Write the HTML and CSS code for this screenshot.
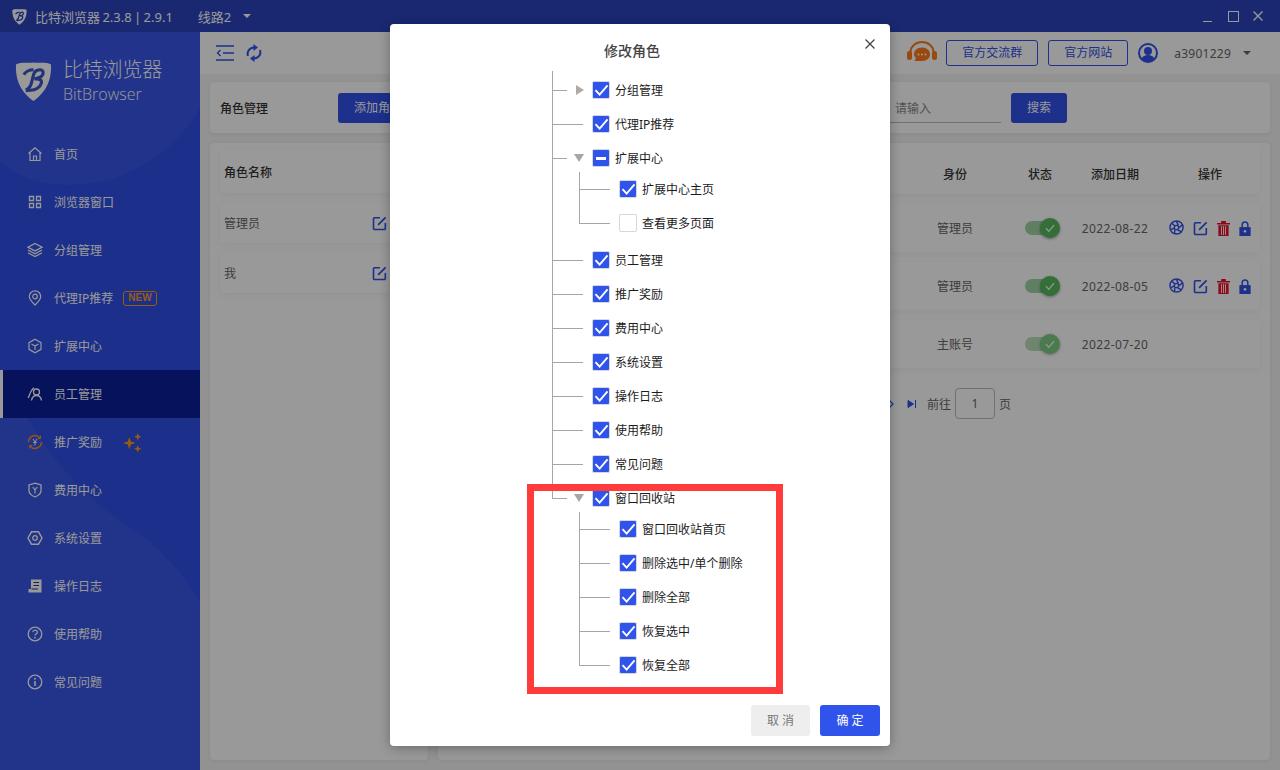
FILE: index.html
```html
<!DOCTYPE html>
<html>
<head>
    <meta charset="utf-8">
    <title>比特浏览器</title>
    <link rel="stylesheet" href="styles.css">
</head>
<body>
    <svg class="defs" xmlns="http://www.w3.org/2000/svg">
        <symbol id="i-edit" viewBox="0 0 16 16">
            <path d="M8.500 1.800H2.800A1.200 1.200 0 0 0 1.600 3v10.200a1.200 1.200 0 0 0 1.200 1.200H13a1.200 1.200 0 0 0 1.200-1.200V7.500" fill="none" stroke="currentColor" stroke-width="1.700"/>
            <path d="M6.500 9.500 14.500 1.500" fill="none" stroke="currentColor" stroke-width="1.700"/>
        </symbol>
        <symbol id="i-wheel" viewBox="0 0 16 16">
            <circle cx="8" cy="8" r="7" fill="none" stroke="currentColor" stroke-width="1.500"/>
            <circle cx="8" cy="8" r="2.300" fill="none" stroke="currentColor" stroke-width="1.300"/>
            <path d="M8 1.500 10 6M14 5.500 10.200 8.500M13 12.500 8.700 10.200M6 14.300 6.200 9.800M1.800 10.500 5.700 8.300M3 3.500 6.300 6.500" fill="none" stroke="currentColor" stroke-width="1.500"/>
        </symbol>
        <symbol id="i-trash" viewBox="0 0 14 16">
            <path d="M0 2h14v1.600H0zM4.500 0h5v2h-5zM1.500 4.500h11V16h-11z" fill="currentColor"/>
            <path d="M4.800 5.500V15M7 5.500V15M9.200 5.500V15" stroke="#fff" stroke-width="1"/>
        </symbol>
        <symbol id="i-lock" viewBox="0 0 12 16">
            <path d="M0 6.500h12V16H0z" fill="currentColor"/>
            <path d="M3 7V4a3 3 0 0 1 6 0v3" fill="none" stroke="currentColor" stroke-width="1.600"/>
            <circle cx="6" cy="11" r="1.400" fill="#fff"/>
        </symbol>
        <symbol id="i-check" viewBox="0 0 16 14">
            <path d="M1.500 6.500 6 11.500 14.500 1.500" fill="none" stroke="currentColor" stroke-width="2"/>
        </symbol>
        <symbol id="i-shield" viewBox="0 0 38 42">
            <path d="M19 2.500C13 3.500 7 1.500 1 4.500 .5 16 3 31 19 42 35 31 37.500 16 37 4.500 31 1.500 25 3.500 19 2.500Z" fill="currentColor"/>
            <path d="M11 31C16 29 17 24 18 19 19 14 20 10 26 10c4 0 4 6-1 8l-5 1.500c5-.5 8 .5 7 4.500-1 4-6 7-11 7-2 0-4 .5-5 .5M9 15c2-3 6-5 10-5" fill="none" stroke="var(--logo-cut)" stroke-width="3.200"/>
        </symbol>
    </svg>

    <header class="titlebar">
        <svg class="title-logo"><use href="#i-shield"/></svg>
        <span class="title-text">比特浏览器 2.3.8 | 2.9.1</span>
        <span class="title-line">线路2</span>
        <span class="caret-down title-caret"></span>
        <div class="win-controls">
            <span class="win-min"></span>
            <span class="win-max"></span>
            <svg class="win-close" viewBox="0 0 10 10"><path d="M.5.500l9 9M9.500.500l-9 9" stroke="currentColor" stroke-width="1.400"/></svg>
        </div>
    </header>

    <div class="app">
        <aside class="sidebar">
            <svg class="sidebar-bg" viewBox="0 0 200 738" preserveAspectRatio="none">
                <path d="M0 0H200V76C178 116 130 153 70 153 40 153 18 145 0 130Z" fill="#fff" opacity=".04"/>
                <path d="M0 386H27C60 440 92 470 128 494 160 515 182 540 200 570V738H0Z" fill="#fff" opacity=".05"/>
            </svg>
            <div class="brand">
                <svg class="brand-logo"><use href="#i-shield"/></svg>
                <div class="brand-text">
                    <div class="brand-cn">比特浏览器</div>
                    <div class="brand-en">BitBrowser</div>
                </div>
            </div>
            <nav class="menu">
                <a class="menu-item">
                    <svg class="menu-icon" viewBox="0 0 16 16"><path d="M1.500 7.500 8 1.800l6.500 5.700M3 6.500V14.500h10V6.500M6.500 14.500V10h3v4.500" fill="none" stroke="currentColor" stroke-width="1.200"/></svg>
                    <span>首页</span>
                </a>
                <a class="menu-item">
                    <svg class="menu-icon" viewBox="0 0 16 16"><path d="M2.500 2.500h4v4h-4zM9.500 2.500h4v4h-4zM2.500 9.500h4v4h-4zM9.500 9.500h4v4h-4z" fill="none" stroke="currentColor" stroke-width="1.300"/></svg>
                    <span>浏览器窗口</span>
                </a>
                <a class="menu-item">
                    <svg class="menu-icon" viewBox="0 0 16 16"><path d="M8 1.500 15 5.200 8 8.900 1 5.200ZM1 8l7 3.700L15 8M1 10.800l7 3.700 7-3.700" fill="none" stroke="currentColor" stroke-width="1.300"/></svg>
                    <span>分组管理</span>
                </a>
                <a class="menu-item">
                    <svg class="menu-icon" viewBox="0 0 16 16"><path d="M8 15C5 12 2.300 9.500 2.300 6.500a5.700 5.700 0 0 1 11.400 0C13.700 9.500 11 12 8 15Z" fill="none" stroke="currentColor" stroke-width="1.200"/><circle cx="8" cy="6.500" r="2.300" fill="none" stroke="currentColor" stroke-width="1.200"/></svg>
                    <span>代理IP推荐</span>
                    <span class="badge-new">NEW</span>
                </a>
                <a class="menu-item">
                    <svg class="menu-icon" viewBox="0 0 16 16"><path d="M8 1.300 14 4.700v6.600L8 14.700 2 11.300V4.700ZM4.500 6 8 8l3.500-2M8 8v4" fill="none" stroke="currentColor" stroke-width="1.200"/></svg>
                    <span>扩展中心</span>
                </a>
                <a class="menu-item active">
                    <svg class="menu-icon" viewBox="0 0 16 16"><circle cx="9.500" cy="6" r="3" fill="none" stroke="currentColor" stroke-width="1.300"/><path d="M4.500 14.500c.5-3 2.500-5 5-5s4.500 2 5 5M7 1.700C5 3 3 7 1.200 12" fill="none" stroke="currentColor" stroke-width="1.300"/></svg>
                    <span>员工管理</span>
                </a>
                <a class="menu-item">
                    <svg class="menu-icon orange" viewBox="0 0 16 16"><path d="M1.500 8A6.500 6.500 0 0 1 13 4M14.500 8A6.500 6.500 0 0 1 3 12" fill="none" stroke="currentColor" stroke-width="1.400"/><path d="M13.500 1.500V4.500H10.500M2.500 14.500V11.500H5.500" fill="none" stroke="currentColor" stroke-width="1"/><path d="M6 5l2 3 2-3M8 8v3.500M6.300 8.500h3.400" fill="none" stroke="#fff" stroke-width="1"/></svg>
                    <span>推广奖励</span>
                    <svg class="sparkle" viewBox="0 0 20 20"><path d="M7 5 8.500 9 13 10.500 8.500 12 7 16.500 5.500 12 1 10.500 5.500 9ZM15 1l1 2.500 2.500 1-2.500 1-1 2.500-1-2.500-2.500-1 2.500-1ZM15 12.500l1 2.500 2.500 1-2.500 1-1 2.500-1-2.500-2.500-1 2.500-1Z" fill="currentColor"/></svg>
                </a>
                <a class="menu-item">
                    <svg class="menu-icon" viewBox="0 0 16 16"><path d="M8 1.200 14 3v5.500c0 3-2.500 5-6 6.500-3.500-1.500-6-3.500-6-6.500V3Z" fill="none" stroke="currentColor" stroke-width="1.300"/><path d="M5.800 5 8 8l2.200-3M8 8v3.500" fill="none" stroke="currentColor" stroke-width="1.200"/></svg>
                    <span>费用中心</span>
                </a>
                <a class="menu-item">
                    <svg class="menu-icon" viewBox="0 0 16 16"><path d="M4.500 1.800h7L15 8l-3.500 6.200h-7L1 8Z" fill="none" stroke="currentColor" stroke-width="1.400"/><circle cx="8" cy="8" r="2.300" fill="none" stroke="currentColor" stroke-width="1.300"/></svg>
                    <span>系统设置</span>
                </a>
                <a class="menu-item">
                    <svg class="menu-icon" viewBox="0 0 16 16"><path d="M4 1.500h10.500V14.500H1.500V11H4Z" fill="currentColor"/><path d="M6.500 4.500h5.500M6.500 7.500h5.500M4.500 11H11" stroke="#1d3090" stroke-width="1.200"/></svg>
                    <span>操作日志</span>
                </a>
                <a class="menu-item">
                    <svg class="menu-icon" viewBox="0 0 16 16"><circle cx="8" cy="8" r="6.800" fill="none" stroke="currentColor" stroke-width="1.300"/><path d="M5.800 6.200C6 4.700 7 4.200 8 4.200c1.400 0 2.300.8 2.300 2 0 1.700-2.300 1.800-2.300 3.400" fill="none" stroke="currentColor" stroke-width="1.300"/><circle cx="8" cy="11.700" r=".9" fill="currentColor"/></svg>
                    <span>使用帮助</span>
                </a>
                <a class="menu-item">
                    <svg class="menu-icon" viewBox="0 0 16 16"><circle cx="8" cy="8" r="6.800" fill="none" stroke="currentColor" stroke-width="1.300"/><path d="M8 7v5" stroke="currentColor" stroke-width="1.600"/><circle cx="8" cy="4.800" r="1" fill="currentColor"/></svg>
                    <span>常见问题</span>
                </a>
            </nav>
        </aside>

        <main class="main">
            <div class="toolbar">
                <svg class="tool-collapse" viewBox="0 0 18 16"><path d="M0 1h18M7 8h11M0 15h18M4.500 5 1.500 8l3 3" fill="none" stroke="currentColor" stroke-width="1.300"/></svg>
                <svg class="tool-refresh" viewBox="0 0 16 18"><path d="M2 12C.5 7.500 3.500 3.500 8.500 3.500M14 6c1.500 4.500-1.500 8.500-6.500 8.500" fill="none" stroke="currentColor" stroke-width="2"/><path d="M7.500 0 12 3.500 7.500 7ZM8.500 11 4 14.500 8.500 18Z" fill="currentColor"/></svg>
                <div class="toolbar-right">
                    <svg class="headset" viewBox="0 0 30 24"><path d="M3.500 14V11a11.500 10 0 0 1 23 0v3" fill="none" stroke="currentColor" stroke-width="2"/><rect x="0" y="10" width="5" height="9" rx="2.500" fill="currentColor"/><rect x="25" y="10" width="5" height="9" rx="2.500" fill="currentColor"/><path d="M15 6.500c5 0 8 3 8 6.800s-3 6.700-8 6.700H7.500l1.500-3c-1.300-1-2-2.300-2-3.700 0-3.800 3-6.800 8-6.800Z" fill="currentColor"/><circle cx="11.500" cy="13.500" r="1" fill="#fff"/><circle cx="15" cy="13.500" r="1" fill="#fff"/><circle cx="18.500" cy="13.500" r="1" fill="#fff"/></svg>
                    <a class="link-btn link-group">官方交流群</a>
                    <a class="link-btn link-site">官方网站</a>
                    <svg class="avatar" viewBox="0 0 20 20"><circle cx="10" cy="10" r="9" fill="#fff" stroke="currentColor" stroke-width="2"/><circle cx="10" cy="8" r="4" fill="currentColor"/><path d="M3.500 16c1-3 3.500-4 6.500-4s5.500 1 6.500 4c-3 3.500-10 3.500-13 0Z" fill="currentColor"/></svg>
                    <span class="user-name">a3901229</span>
                    <span class="caret-down user-caret"></span>
                </div>
            </div>

            <div class="content">
                <section class="panel">
                    <span class="panel-title">角色管理</span>
                    <a class="btn btn-add">添加角色</a>
                    <div class="search">
                        <span class="search-input">请输入</span>
                        <a class="btn btn-search">搜索</a>
                    </div>
                </section>

                <div class="columns">
                    <section class="card card-roles">
                        <div class="role-row role-head">角色名称</div>
                        <div class="role-row">
                            <span>管理员</span>
                            <svg class="ico-edit"><use href="#i-edit"/></svg>
                        </div>
                        <div class="role-row">
                            <span>我</span>
                            <svg class="ico-edit"><use href="#i-edit"/></svg>
                        </div>
                    </section>

                    <section class="card card-staff">
                        <div class="staff-row staff-head">
                            <span class="col-role">身份</span>
                            <span class="col-state">状态</span>
                            <span class="col-date">添加日期</span>
                            <span class="col-ops">操作</span>
                        </div>
                        <div class="staff-row">
                            <span class="col-role">管理员</span>
                            <span class="col-state"><span class="switch"><span class="switch-knob"><svg><use href="#i-check"/></svg></span></span></span>
                            <span class="col-date">2022-08-22</span>
                            <span class="col-ops">
                                <svg class="op op-wheel"><use href="#i-wheel"/></svg>
                                <svg class="op op-edit"><use href="#i-edit"/></svg>
                                <svg class="op op-trash"><use href="#i-trash"/></svg>
                                <svg class="op op-lock"><use href="#i-lock"/></svg>
                            </span>
                        </div>
                        <div class="staff-row">
                            <span class="col-role">管理员</span>
                            <span class="col-state"><span class="switch"><span class="switch-knob"><svg><use href="#i-check"/></svg></span></span></span>
                            <span class="col-date">2022-08-05</span>
                            <span class="col-ops">
                                <svg class="op op-wheel"><use href="#i-wheel"/></svg>
                                <svg class="op op-edit"><use href="#i-edit"/></svg>
                                <svg class="op op-trash"><use href="#i-trash"/></svg>
                                <svg class="op op-lock"><use href="#i-lock"/></svg>
                            </span>
                        </div>
                        <div class="staff-row">
                            <span class="col-role">主账号</span>
                            <span class="col-state"><span class="switch disabled"><span class="switch-knob"><svg><use href="#i-check"/></svg></span></span></span>
                            <span class="col-date">2022-07-20</span>
                            <span class="col-ops"></span>
                        </div>
                        <div class="pager">
                            <svg class="pager-next" viewBox="0 0 6 10"><path d="M1 1l4 4-4 4" fill="none" stroke="currentColor" stroke-width="1.200"/></svg>
                            <svg class="pager-last" viewBox="0 0 10 10"><path d="M1 1.500 6.500 5 1 8.500ZM8.500 1v8" fill="currentColor" stroke="currentColor" stroke-width="1"/></svg>
                            <span>前往</span>
                            <span class="pager-input">1</span>
                            <span>页</span>
                        </div>
                    </section>
                </div>
            </div>
        </main>
    </div>

    <div class="overlay"></div>

    <div class="modal">
        <div class="modal-head">
            <span class="modal-title">修改角色</span>
            <svg class="modal-close" viewBox="0 0 10 10"><path d="M.5.500l9 9M9.500.500l-9 9" stroke="currentColor" stroke-width="1.300"/></svg>
        </div>
        <ul class="tree">
            <li class="node"><div class="row has-caret"><i class="tri tri-right"></i><span class="box on"><svg><use href="#i-check"/></svg></span>分组管理</div></li>
            <li class="node"><div class="row"><span class="box on"><svg><use href="#i-check"/></svg></span>代理IP推荐</div></li>
            <li class="node">
                <div class="row has-caret"><i class="tri tri-down"></i><span class="box on"><b class="dash"></b></span>扩展中心</div>
                <ul class="tree-sub">
                    <li class="node"><div class="row"><span class="box on"><svg><use href="#i-check"/></svg></span>扩展中心主页</div></li>
                    <li class="node"><div class="row"><span class="box"></span>查看更多页面</div></li>
                </ul>
            </li>
            <li class="node"><div class="row"><span class="box on"><svg><use href="#i-check"/></svg></span>员工管理</div></li>
            <li class="node"><div class="row"><span class="box on"><svg><use href="#i-check"/></svg></span>推广奖励</div></li>
            <li class="node"><div class="row"><span class="box on"><svg><use href="#i-check"/></svg></span>费用中心</div></li>
            <li class="node"><div class="row"><span class="box on"><svg><use href="#i-check"/></svg></span>系统设置</div></li>
            <li class="node"><div class="row"><span class="box on"><svg><use href="#i-check"/></svg></span>操作日志</div></li>
            <li class="node"><div class="row"><span class="box on"><svg><use href="#i-check"/></svg></span>使用帮助</div></li>
            <li class="node"><div class="row"><span class="box on"><svg><use href="#i-check"/></svg></span>常见问题</div></li>
            <li class="node">
                <div class="row has-caret"><i class="tri tri-down"></i><span class="box on"><svg><use href="#i-check"/></svg></span>窗口回收站</div>
                <ul class="tree-sub">
                    <li class="node"><div class="row"><span class="box on"><svg><use href="#i-check"/></svg></span>窗口回收站首页</div></li>
                    <li class="node"><div class="row"><span class="box on"><svg><use href="#i-check"/></svg></span>删除选中/单个删除</div></li>
                    <li class="node"><div class="row"><span class="box on"><svg><use href="#i-check"/></svg></span>删除全部</div></li>
                    <li class="node"><div class="row"><span class="box on"><svg><use href="#i-check"/></svg></span>恢复选中</div></li>
                    <li class="node"><div class="row"><span class="box on"><svg><use href="#i-check"/></svg></span>恢复全部</div></li>
                </ul>
            </li>
        </ul>
        <div class="modal-foot">
            <a class="foot-btn foot-cancel">取 消</a>
            <a class="foot-btn foot-ok">确 定</a>
        </div>
    </div>

    <div class="highlight"></div>
</body>
</html>
```

FILE: styles.css
```css
* {
    box-sizing: border-box;
}

html, body {
    margin: 0;
    height: 100%;
}

body {
    width: 1280px;
    height: 770px;
    overflow: hidden;
    position: relative;
    display: flex;
    flex-direction: column;
    font-family: "Noto Sans", "Noto Sans CJK SC", sans-serif;
    font-size: 12px;
    color: #666;
    background: #f3f3f3;
}

ul {
    list-style: none;
    margin: 0;
    padding: 0;
}

.defs {
    position: absolute;
    width: 0;
    height: 0;
}

.caret-down {
    width: 0;
    height: 0;
    border-left: 4px solid transparent;
    border-right: 4px solid transparent;
    border-top: 4px solid currentColor;
}

/* title bar */
.titlebar {
    flex: none;
    height: 32px;
    display: flex;
    align-items: center;
    padding-left: 12px;
    background: #2a43bd;
    color: #fff;
    font-size: 13px;
    --logo-cut: #2a43bd;
}

.title-logo {
    width: 15px;
    height: 17px;
    margin-right: 8px;
}

.title-text {
    word-spacing: -1px;
}

.title-line {
    margin-left: 25px;
}

.title-caret {
    margin-left: 12px;
}

.win-controls {
    margin-left: auto;
    display: flex;
    align-items: center;
    padding-right: 17px;
}

.win-min {
    width: 9px;
    height: 1px;
    margin-top: 10px;
    background: #fff;
}

.win-max {
    width: 11px;
    height: 11px;
    margin-left: 16px;
    border: 1.500px solid #fff;
}

.win-close {
    width: 10px;
    height: 10px;
    margin-left: 14px;
}

.app {
    flex: 1;
    display: flex;
    min-height: 0;
}

/* sidebar */
.sidebar {
    flex: none;
    width: 200px;
    position: relative;
    background: #2f4fe6;
    color: #fff;
    --logo-cut: #3a55c8;
}

.sidebar-bg {
    position: absolute;
    top: 0;
    left: 0;
    width: 200px;
    height: 738px;
}

.brand {
    position: relative;
    height: 98px;
    display: flex;
    padding: 28px 0 0 15px;
}

.brand-logo {
    width: 37px;
    height: 41px;
    margin-right: 11px;
}

.brand-cn {
    font-size: 20px;
    line-height: 20px;
    font-weight: 300;
    letter-spacing: -.2px;
}

.brand-en {
    font-family: "Open Sans", sans-serif;
    font-size: 16px;
    font-weight: 300;
    line-height: 20px;
    margin-top: 4px;
}

.menu {
    position: relative;
}

.menu-item {
    height: 48px;
    display: flex;
    align-items: center;
    padding-left: 27px;
}

.menu-item.active {
    background: #0c1f9a;
    position: relative;
}

.menu-item.active::before {
    content: "";
    position: absolute;
    left: 0;
    top: 0;
    bottom: 0;
    width: 3px;
    background: #fff;
}

.menu-icon {
    flex: none;
    width: 16px;
    height: 16px;
    margin-right: 11px;
}

.menu-icon.orange {
    color: #ff8a1f;
}

.badge-new {
    margin-left: 10px;
    padding: 0 4px;
    height: 15px;
    line-height: 12px;
    border: 1.500px solid #ff9a1a;
    border-radius: 3px;
    color: #ff9a1a;
    font-family: "Liberation Sans", sans-serif;
    font-size: 10px;
    font-weight: 700;
}

.sparkle {
    width: 21px;
    height: 21px;
    margin-left: 20px;
    color: #ff9a1a;
}

/* main area */
.main {
    flex: 1;
    min-width: 0;
    display: flex;
    flex-direction: column;
}

.toolbar {
    flex: none;
    height: 42px;
    display: flex;
    align-items: center;
    padding: 0 29px 0 16px;
    background: #fff;
    color: #3050ea;
}

.tool-collapse {
    width: 18px;
    height: 16px;
}

.tool-refresh {
    width: 16px;
    height: 18px;
    margin-left: 12px;
}

.toolbar-right {
    margin-left: auto;
    display: flex;
    align-items: center;
}

.headset {
    width: 30px;
    height: 24px;
    margin-right: 9px;
    color: #ff7a1a;
}

.link-btn {
    height: 26px;
    line-height: 24px;
    border: 1px solid #3050ea;
    border-radius: 3px;
    text-align: center;
}

.link-group {
    width: 92px;
}

.link-site {
    width: 80px;
    margin-left: 10px;
}

.avatar {
    width: 20px;
    height: 20px;
    margin-left: 10px;
}

.user-name {
    margin-left: 16px;
    color: #666;
    letter-spacing: .25px;
}

.user-caret {
    margin-left: 12px;
    color: #666;
}

.content {
    flex: 1;
    min-height: 0;
    display: flex;
    flex-direction: column;
    gap: 10px;
    padding: 8px 10px 10px;
}

.panel {
    flex: none;
    height: 51px;
    display: flex;
    align-items: center;
    padding: 0 203px 0 10px;
    background: #fff;
    border-radius: 4px;
    box-shadow: 0 1px 4px rgba(0, 0, 0, .06);
}

.panel-title {
    width: 118px;
    color: #333;
    font-weight: 500;
}

.btn {
    height: 30px;
    line-height: 30px;
    background: #3050ea;
    border-radius: 3px;
    color: #fff;
    text-align: center;
}

.btn-add {
    width: 80px;
}

.search {
    margin-left: auto;
    display: flex;
    align-items: center;
}

.search-input {
    width: 116px;
    height: 30px;
    line-height: 32px;
    padding-left: 10px;
    border-bottom: 1px solid #bbb;
    color: #888;
}

.btn-search {
    width: 56px;
    margin-left: 10px;
}

.columns {
    flex: 1;
    min-height: 0;
    display: flex;
    gap: 10px;
}

.card {
    background: #fff;
    border-radius: 4px;
    box-shadow: 0 1px 4px rgba(0, 0, 0, .06);
}

.card-roles {
    flex: none;
    width: 218px;
    padding: 7px 10px;
}

.role-row {
    height: 40px;
    display: flex;
    align-items: center;
    justify-content: space-between;
    margin-top: 10px;
    padding: 0 4px;
    box-shadow: 0 2px 8px rgba(0, 0, 0, .05);
    border-radius: 4px;
}

.role-head {
    height: 43px;
    margin-top: 0;
    padding-top: 1px;
    color: #333;
    font-weight: 500;
}

.ico-edit {
    width: 15px;
    height: 15px;
    margin-right: 27px;
    color: #3050ea;
}

.card-staff {
    flex: 1;
    min-width: 0;
    padding: 0 10px;
}

.staff-row {
    height: 48px;
    margin-top: 10px;
    display: flex;
    align-items: center;
    justify-content: flex-end;
    border-radius: 4px;
    box-shadow: 0 2px 8px rgba(0, 0, 0, .05);
    text-align: center;
}

.staff-head {
    height: 51px;
    margin-top: 0;
    padding-top: 10px;
    color: #333;
    font-weight: 500;
}

.col-role {
    width: 110px;
}

.col-state {
    width: 60px;
    display: flex;
    justify-content: center;
}

.col-date {
    width: 90px;
    letter-spacing: .4px;
}

.staff-head .col-date {
    letter-spacing: 0;
}

.col-ops {
    width: 100px;
    display: flex;
    align-items: center;
    justify-content: center;
    gap: 9px;
}

.switch {
    position: relative;
    width: 30px;
    height: 14px;
    border-radius: 7px;
    background: #a0d4a4;
}

.switch-knob {
    position: absolute;
    right: -5px;
    top: -3px;
    width: 20px;
    height: 20px;
    display: flex;
    align-items: center;
    justify-content: center;
    border-radius: 50%;
    background: #55ba5c;
    box-shadow: 0 1px 3px rgba(0, 0, 0, .4);
    color: #fff;
}

.switch-knob svg {
    width: 10px;
    height: 9px;
}

.switch.disabled {
    opacity: .75;
}

.op {
    flex: none;
    width: 15px;
    height: 15px;
    color: #3050ea;
}

.op-wheel {
    margin-top: -2px;
}

.op-trash {
    color: #e8102a;
    width: 13px;
}

.op-lock {
    width: 12px;
}

.pager {
    margin-top: 20px;
    display: flex;
    align-items: center;
    justify-content: flex-end;
    padding-right: 249px;
}

.pager-next {
    width: 6px;
    height: 10px;
    margin-right: 13px;
    color: #3050ea;
}

.pager-last {
    width: 10px;
    height: 10px;
    margin-right: 10px;
    color: #3050ea;
}

.pager-input {
    width: 40px;
    height: 31px;
    line-height: 29px;
    margin: 0 4px;
    border: 1px solid #bbb;
    border-radius: 4px;
    text-align: center;
}

/* dialog over the page */
.overlay {
    position: absolute;
    inset: 0;
    background: rgba(0, 0, 0, .4);
}

.modal {
    position: absolute;
    left: 390px;
    top: 24px;
    width: 500px;
    height: 722px;
    display: flex;
    flex-direction: column;
    background: #fff;
    border-radius: 4px;
    box-shadow: 0 2px 12px rgba(0, 0, 0, .3);
    color: #1c1c1c;
}

.modal-head {
    flex: none;
    height: 47px;
    position: relative;
    padding: 18px 16px 0 214px;
}

.modal-title {
    display: block;
    font-size: 14px;
    line-height: 18px;
    font-weight: 500;
    color: #444;
}

.modal-close {
    position: absolute;
    right: 15px;
    top: 15px;
    width: 10px;
    height: 10px;
    color: #444;
}

.tree {
    flex: 1;
    margin-left: 162px;
    padding-top: 2px;
}

.tree-sub {
    margin: -3px 0 0 27px;
    padding-bottom: 3px;
}

.node {
    position: relative;
}

.node::before {
    content: "";
    position: absolute;
    left: 0;
    top: 0;
    bottom: 0;
    width: 1px;
    background: #a6a6a6;
}

.tree > .node:first-child::before {
    top: -2px;
}

.node:last-child::before {
    bottom: auto;
    height: 17px;
}

.row {
    position: relative;
    height: 34px;
    display: flex;
    align-items: center;
    padding-left: 40px;
}

.row::before {
    content: "";
    position: absolute;
    left: 0;
    top: 17px;
    width: 31px;
    height: 1px;
    background: #a6a6a6;
}

.row.has-caret::before {
    width: 15px;
}

.tri {
    position: absolute;
    width: 0;
    height: 0;
}

.tri-right {
    left: 24px;
    top: 12px;
    border-left: 8px solid #b3a9a0;
    border-top: 5px solid transparent;
    border-bottom: 5px solid transparent;
}

.tri-down {
    left: 22px;
    top: 13px;
    border-top: 8px solid #a6a6a6;
    border-left: 5px solid transparent;
    border-right: 5px solid transparent;
}

.box {
    flex: none;
    width: 18px;
    height: 18px;
    margin-right: 5px;
    display: flex;
    align-items: center;
    justify-content: center;
    border: 1px solid #d4d7de;
    border-radius: 2px;
    background: #fff;
    color: #fff;
}

.box.on {
    background: #3054eb;
}

.box svg {
    width: 15px;
    height: 13px;
}

.dash {
    width: 10px;
    height: 3px;
    background: #fff;
}

.modal-foot {
    flex: none;
    height: 41px;
    display: flex;
    justify-content: flex-end;
    gap: 10px;
    padding: 0 10px 10px;
}

.foot-btn {
    width: 59px;
    height: 31px;
    line-height: 31px;
    border-radius: 3px;
    text-align: center;
}

.foot-cancel {
    background: #eee;
    color: #777;
}

.foot-ok {
    width: 60px;
    background: #3054eb;
    color: #fff;
}

/* red note drawn on the shot */
.highlight {
    position: absolute;
    left: 527px;
    top: 484px;
    width: 256px;
    height: 210px;
    border: 7px solid #ff3b3b;
}
```
